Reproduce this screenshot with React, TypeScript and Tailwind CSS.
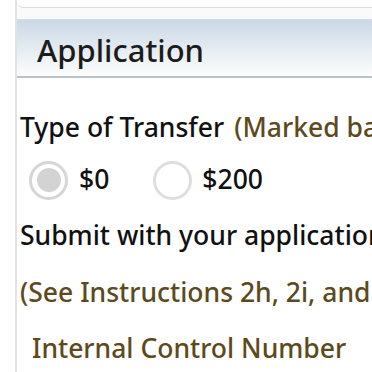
export default function App() {
  return (
    <div className="w-[372px] h-[372px] overflow-hidden bg-white flex font-['Noto_Sans','Open_Sans',sans-serif]">
      <div className="ml-[15px] flex-1 border-l-2 border-[#e2e2e2] flex flex-col min-w-0">
        <div className="h-[8px] border-b border-[#dcdcdc] rounded-bl-[6px] bg-white" />
        <div className="h-[11px] bg-[#fafafa]" />
        <div className="h-[59px] border-t border-[#d6dde4] border-b-2 border-b-[#bcc3c8] bg-gradient-to-b from-[#cbd8e6] to-[#fdfefc] flex items-center pl-[20px]">
          <span className="text-[31px] font-medium text-[#1c1c1c] whitespace-nowrap leading-none pt-[4px]">
            Application
          </span>
        </div>
        <div className="flex flex-col pl-[3px] whitespace-nowrap text-[26.5px] font-medium">
          <div className="h-[42px] mt-[29px] flex items-center text-[#111]">
            Type of Transfer
            <span className="ml-[10px] text-[#5c4a1c]">(Marked based on</span>
          </div>
          <div className="h-[42px] mt-[10px] flex items-center text-[#111]">
            <label className="flex items-center ml-[9px]">
              <span className="w-[39px] h-[39px] rounded-full border-[3px] border-[#d6d6d6] bg-white flex items-center justify-center">
                <span className="w-[24px] h-[24px] rounded-full bg-[#d3d3d3]" />
              </span>
              <span className="ml-[11px]">$0</span>
            </label>
            <label className="flex items-center ml-[44px]">
              <span className="w-[39px] h-[39px] rounded-full border-[3px] border-[#dedede] bg-white" />
              <span className="ml-[10px]">$200</span>
            </label>
          </div>
          <div className="h-[42px] mt-[14px] flex items-center text-[#111]">
            Submit with your application
          </div>
          <div className="h-[42px] mt-[15px] flex items-center text-[#5c4a1c]">
            (See Instructions 2h, 2i, and 2j)
          </div>
          <div className="h-[42px] mt-[14px] flex items-center pl-[12px] text-[#5c4a1c]">
            Internal Control Number
          </div>
        </div>
      </div>
    </div>
  );
}
